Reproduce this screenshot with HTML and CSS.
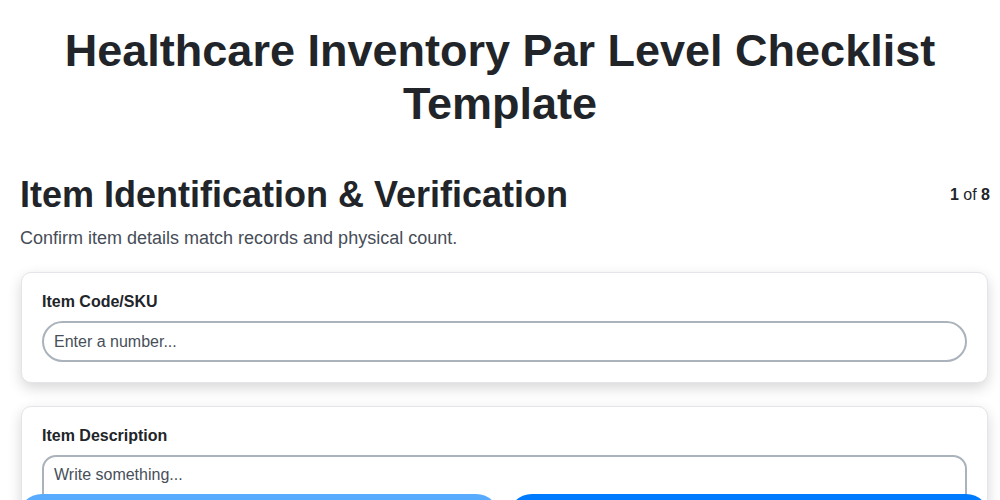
FILE: index.html
```html
<!DOCTYPE html>
<html>
<head>
<meta charset="utf-8">
<link rel="stylesheet" href="styles.css">
</head>
<body>
<h1 class="title">Healthcare Inventory Par Level Checklist Template</h1>
<div class="page">
  <div class="section-head">
    <h2 class="section-title">Item Identification &amp; Verification</h2>
    <div class="step"><b>1</b> of <b>8</b></div>
  </div>
  <p class="section-desc">Confirm item details match records and physical count.</p>
  <div class="card">
    <label class="label">Item Code/SKU</label>
    <input class="input" type="text" placeholder="Enter a number...">
  </div>
  <div class="card">
    <label class="label">Item Description</label>
    <textarea class="textarea" placeholder="Write something..."></textarea>
  </div>
</div>
<div class="footer">
  <button class="btn btn-prev">Previous</button>
  <button class="btn btn-next">Next</button>
</div>
</body>
</html>
```
FILE: styles.css
```css
* { box-sizing: border-box; }
html, body { margin: 0; padding: 0; }
body {
  font-family: "Liberation Sans", Arial, sans-serif;
  color: #212529;
  background: #fff;
}
.page {
  padding: 0 10px 80px 20px;
}
.title {
  font-size: 45px;
  line-height: 53px;
  font-weight: 700;
  text-align: center;
  margin: 24px 0 43px;
  padding: 0 40px;
}
.section-head {
  display: flex;
  justify-content: space-between;
  align-items: center;
}
.section-title {
  font-size: 36px;
  line-height: 43px;
  margin: 0;
  font-weight: 700;
}
.step {
  font-size: 16px;
}
.section-desc {
  font-size: 18px;
  color: #464d57;
  margin: 12px 0 24px;
  line-height: 20px;
}
.card {
  background: #fff;
  border: 1px solid #e4e4ea;
  border-radius: 10px;
  box-shadow: 0 5px 14px rgba(0,0,0,0.16);
  padding: 19px 20px 20px 20px;
  margin: 0 2px 23px 1px;
  display: flex;
  flex-direction: column;
}
.label {
  font-size: 16px;
  font-weight: 700;
  line-height: 19px;
  margin-bottom: 10px;
}
.input, .textarea {
  font-family: "Liberation Sans", Arial, sans-serif;
  font-size: 16px;
  border: 2px solid #aab2bb;
  padding: 9px 10px;
  color: #212529;
  outline: none;
  background: #fff;
}
.input {
  height: 41px;
  border-radius: 21px;
}
.textarea {
  height: 90px;
  border-radius: 14px;
  resize: none;
}
.input::placeholder, .textarea::placeholder { color: #474f59; }
.footer {
  position: fixed;
  left: 0;
  right: 0;
  bottom: -42px;
  display: flex;
  gap: 8px;
  padding: 0 10px 0 18px;
}
.btn {
  flex: 1;
  height: 48px;
  border: none;
  border-radius: 24px;
  color: #fff;
  font-family: "Liberation Sans", Arial, sans-serif;
  font-size: 16px;
  font-weight: 700;
}
.btn-prev { background: #58abff; }
.btn-next { background: #007bff; }
```
